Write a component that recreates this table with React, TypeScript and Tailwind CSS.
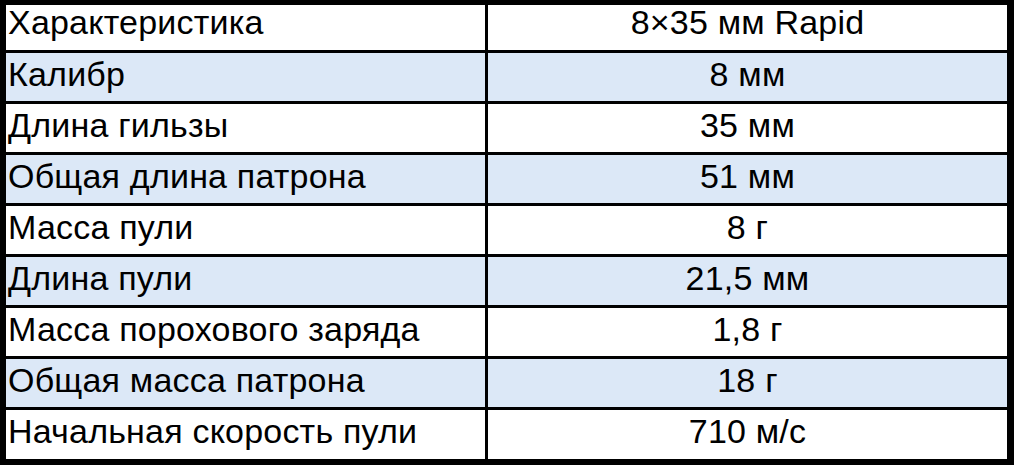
import React from 'react';

// rows of the table: label and value
const rows: [string, string][] = [
  ['Характеристика', '8×35 мм Rapid'],
  ['Калибр', '8 мм'],
  ['Длина гильзы', '35 мм'],
  ['Общая длина патрона', '51 мм'],
  ['Масса пули', '8 г'],
  ['Длина пули', '21,5 мм'],
  ['Масса порохового заряда', '1,8 г'],
  ['Общая масса патрона', '18 г'],
  ['Начальная скорость пули', '710 м/с'],
];

const App: React.FC = () => {
  return (
    <div className="w-[1014px] h-[465px] bg-white">
      <div
        className="grid grid-cols-[479px_519px] grid-rows-[45px_repeat(7,48px)_49px] gap-[3px] bg-black pt-[5px] pl-[6px] pr-[7px] pb-[6px] text-[34px] tracking-[0.2px] text-black"
        style={{ fontFamily: '"Liberation Sans", Arial, sans-serif' }}
      >
        {rows.map(([label, value], i) => {
          const bg = i % 2 === 1 ? 'bg-[#dce8f7]' : 'bg-white';
          const pad = i === 0 ? 'leading-[34px] pt-0' : 'leading-[36px] pt-[3px]';
          return (
            <React.Fragment key={label}>
              <div className={`${bg} ${pad} pl-[2px] whitespace-nowrap`}>{label}</div>
              <div className={`${bg} ${pad} text-center whitespace-nowrap`}>{value}</div>
            </React.Fragment>
          );
        })}
      </div>
    </div>
  );
};

export default App;
